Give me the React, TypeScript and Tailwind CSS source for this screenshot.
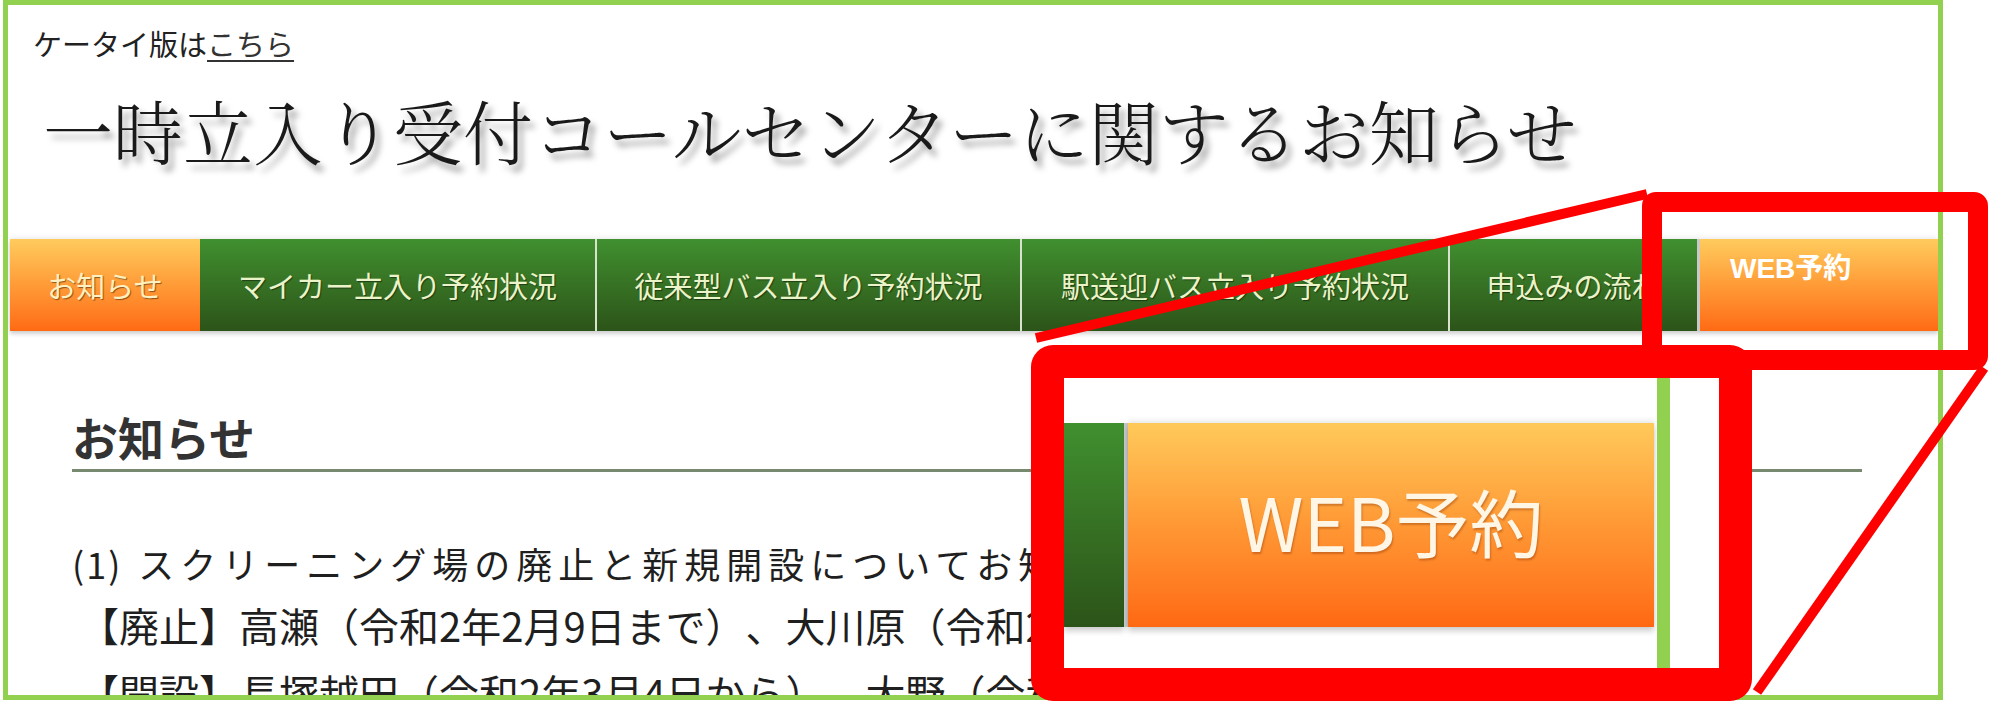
import clsx from 'clsx';

const sans = "font-['Noto_Sans_CJK_JP','Noto_Sans',sans-serif]";

type Tab = { label: string; className: string };

const tabs: Tab[] = [
  {
    label: 'お知らせ',
    className:
      'w-[190px] bg-linear-to-b from-[#ffcb5c] via-[#ff9b37] to-[#ff6a12] text-[#fff1bf]',
  },
  {
    label: 'マイカー立入り予約状況',
    className: 'w-[397px] bg-linear-to-b from-[#40902f] to-[#2c5419] border-r-2 border-[#d8e2cf]',
  },
  {
    label: '従来型バス立入り予約状況',
    className: 'w-[425px] bg-linear-to-b from-[#40902f] to-[#2c5419] border-r-2 border-[#d8e2cf]',
  },
  {
    label: '駅送迎バス立入り予約状況',
    className: 'w-[428px] bg-linear-to-b from-[#40902f] to-[#2c5419] border-r-2 border-[#d8e2cf]',
  },
  {
    label: '申込みの流れ',
    className: 'w-[250px] bg-linear-to-b from-[#40902f] to-[#2c5419] border-r-[3px] border-[#c9c9c9]',
  },
];

function NavBar() {
  return (
    <nav className="ml-[2px] flex h-[92px] shadow-[0_3px_4px_rgba(0,0,0,0.18),0_-2px_5px_rgba(0,0,0,0.07)]">
      {tabs.map((t) => (
        <div
          key={t.label}
          className={clsx(
            'flex h-full shrink-0 items-center justify-center whitespace-nowrap text-[29px] leading-none text-[#ebf4c8] [text-shadow:1px_1px_1px_rgba(0,0,0,0.45)]',
            t.className
          )}
        >
          {t.label}
        </div>
      ))}
      <div className="flex h-full w-[238px] shrink-0 items-start bg-linear-to-b from-[#ffcb5c] via-[#ff9b37] to-[#ff6a12] pl-[30px] pt-[14px] font-['Liberation_Sans','Noto_Sans_CJK_JP',sans-serif] text-[28px] font-bold leading-[32px] text-white">
        WEB予約
      </div>
    </nav>
  );
}

// magnified copy of the WEB button, inside the big callout
function Callout() {
  return (
    <div className="absolute left-[1031px] top-[345px] h-[356px] w-[721px] overflow-hidden rounded-[22px] border-[33px] border-[#ff0000] bg-white">
      <div className="flex h-full">
        <div className="flex pt-[45px]">
          <div className="h-[204px] w-[60px] bg-linear-to-b from-[#40902f] to-[#2c5419] shadow-[0_4px_6px_rgba(0,0,0,0.2)]" />
          <div className="h-[204px] w-[4px] bg-[#c9c9c9]" />
          <div className="flex h-[204px] w-[526px] items-center justify-center pb-[10px] bg-linear-to-b from-[#ffc95a] via-[#ff9834] to-[#ff6812] text-[74px] leading-none text-[#fff6e6] shadow-[0_4px_6px_rgba(0,0,0,0.2),0_-3px_5px_rgba(0,0,0,0.08)] [text-shadow:1px_2px_2px_rgba(120,40,0,0.35)]">
            WEB予約
          </div>
        </div>
        <div className="ml-[3px] h-full w-[13px] bg-[#92d050]" />
      </div>
    </div>
  );
}

export default function App() {
  return (
    <div
      className={clsx(
        'relative h-[704px] w-[2000px] overflow-hidden bg-white text-[#1f1f1f] [text-spacing-trim:space-all]',
        sans
      )}
    >
      <div className="ml-[3px] h-[700px] w-[1940px] overflow-hidden border-[5px] border-[#92d050]">
        <div className="pl-[25px] pt-[20px] text-[29px] leading-[36px] text-[#222]">
          ケータイ版は<span className="text-[#333] underline underline-offset-4">こちら</span>
        </div>

        <h1 className="mt-[29px] whitespace-nowrap pl-[35px] font-['Noto_Serif_CJK_JP','Noto_Sans_CJK_JP',serif] text-[70px] font-light leading-[80px] text-[#1a1a1a] [text-shadow:5px_7px_6px_rgba(0,0,0,0.35)]">
          一時立入り受付コールセンターに関するお知らせ
        </h1>

        <div className="mt-[69px]">
          <NavBar />
        </div>

        <section className="pl-[64px] pr-[76px]">
          <h2 className="mt-[77px] border-b-[3px] border-[#778a70] pb-[5px] text-[46px] font-bold leading-[56px] text-[#333]">
            お知らせ
          </h2>
          <p className="mt-[69px] whitespace-nowrap text-[36px] leading-[44px] tracking-[6px]">
            <span className="mr-[16px] tracking-[2px]">(1)</span>
            スクリーニング場の廃止と新規開設についてお知らせ
          </p>
          <p className="mt-[12px] whitespace-nowrap pl-[7px] text-[40px] leading-[56px]">
            【廃止】高瀬（令和2年2月9日まで）、大川原（令和2年3月1日まで）
          </p>
          <p className="mt-[11px] whitespace-nowrap pl-[7px] text-[40px] leading-[56px]">
            【開設】長塚越田（令和2年3月4日から）、大野（令和2年3月5日から）
          </p>
        </section>
      </div>

      {/* annotation: box around the WEB button */}
      <div className="absolute left-[1642px] top-[192px] h-[178px] w-[346px] rounded-[14px] border-[20px] border-[#ff0000]" />

      <Callout />

      <svg className="pointer-events-none absolute left-0 top-0" width="2000" height="704" viewBox="0 0 2000 704">
        <line x1="1647" y1="194" x2="1036" y2="338" stroke="#ff0000" strokeWidth="10" />
        <line x1="1984" y1="368" x2="1757" y2="692" stroke="#ff0000" strokeWidth="10" />
      </svg>
    </div>
  );
}
